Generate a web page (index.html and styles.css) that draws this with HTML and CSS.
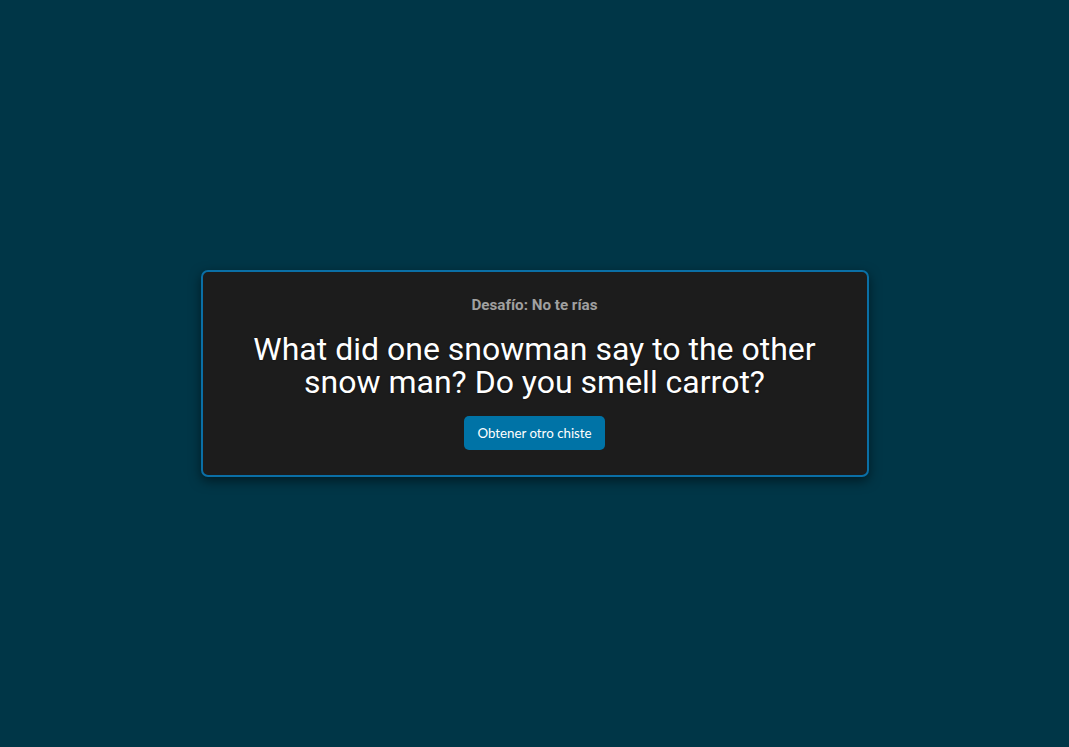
FILE: index.html
```html
<!DOCTYPE html>
<html lang="es">
<head>
<meta charset="utf-8">
<title>Desafío: No te rías</title>
<link rel="stylesheet" href="styles.css">
</head>
<body>
<main class="page">
  <section class="card">
    <h2 class="card-title">Desafío: No te rías</h2>
    <p class="joke">What did one snowman say to the other snow man? Do you smell carrot?</p>
    <button class="btn" type="button">Obtener otro chiste</button>
  </section>
</main>
</body>
</html>
```
FILE: styles.css
```css
* { box-sizing: border-box; }
html, body { margin: 0; height: 100%; }
body {
  background: #003647;
  font-family: Roboto, "Noto Sans", sans-serif;
}
.page {
  min-height: 100%;
  display: flex;
  align-items: center;
  justify-content: center;
}
.card {
  width: 668px;
  background: #1c1c1c;
  border: 2px solid #0a6fa6;
  border-radius: 7px;
  padding: 24px 32px 25px;
  box-shadow: 0 4px 12px rgba(0,0,0,0.5);
  display: flex;
  flex-direction: column;
  align-items: center;
  text-align: center;
}
.card-title {
  margin: 0;
  font-size: 15.2px;
  font-weight: 700;
  color: #a0a0a0;
  line-height: 18px;
}
.joke {
  margin: 19px 0 17px;
  font-size: 32px;
  line-height: 33px;
  color: #ffffff;
  text-shadow: 0 0 2px rgba(0,0,0,0.6);
}
.btn {
  font-family: Lato, "Open Sans", sans-serif;
  font-size: 13.3px;
  color: #ffffff;
  background: #0073a6;
  border: none;
  border-radius: 5px;
  height: 34px;
  width: 141px;
  padding: 0;
  cursor: pointer;
}
```
